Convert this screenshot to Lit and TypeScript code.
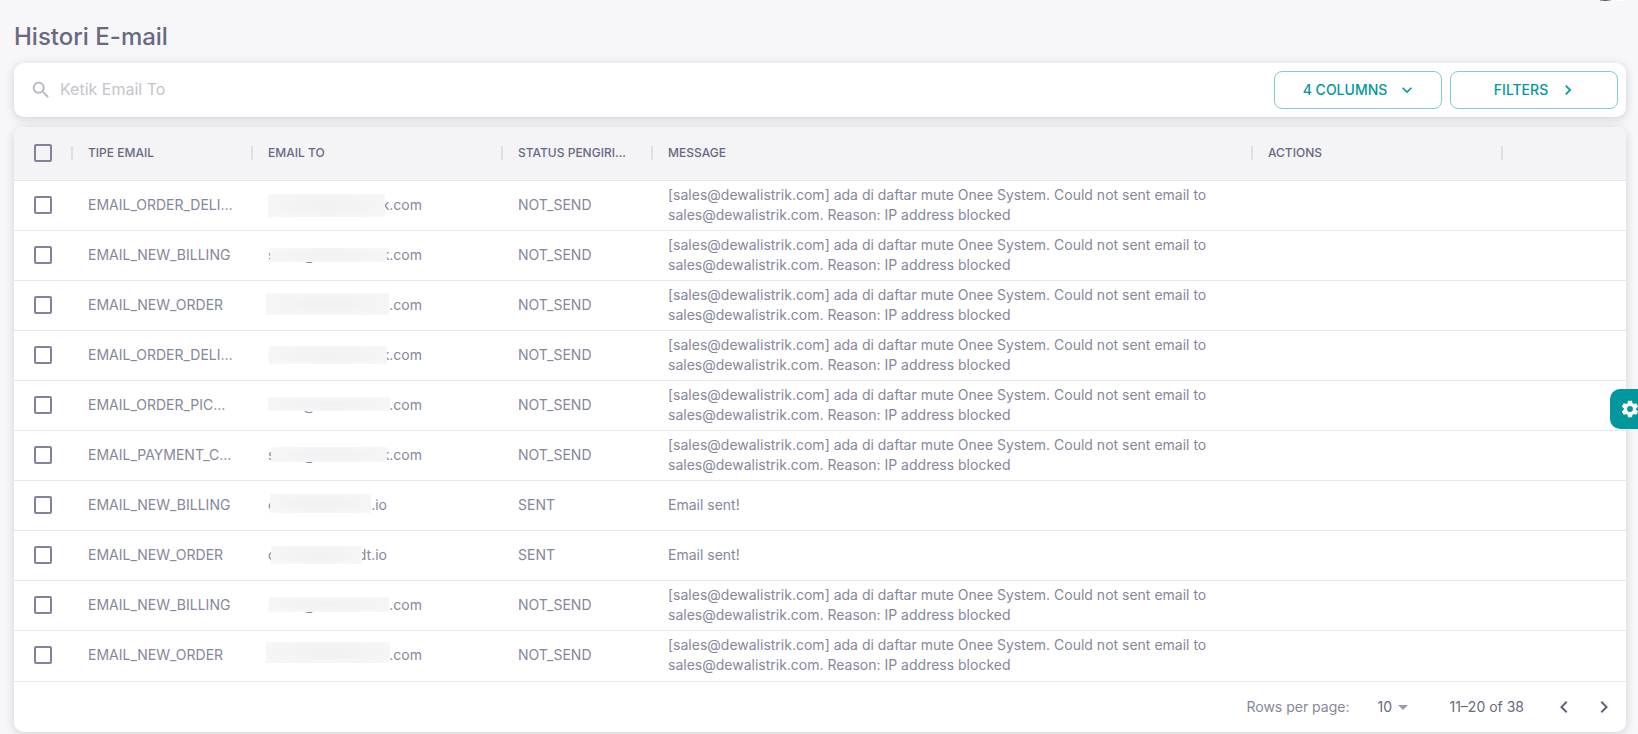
import { LitElement, html, css, svg } from "lit";
import { customElement, property, state } from "lit/decorators.js";
import { styleMap } from "lit/directives/style-map.js";

interface Mask {
  x: number;
  y: number;
  w: number;
  h: number;
}

interface MailRow {
  type: string;
  lead: string;
  tail: string;
  short?: boolean;
  status: string;
  message: string;
  mask: Mask;
}

const BLOCKED =
  "[sales@dewalistrik.com] ada di daftar mute Onee System. Could not sent email to sales@dewalistrik.com. Reason: IP address blocked";

const failed = (type: string, x: number, y: number, w: number, h: number): MailRow => ({
  type,
  lead: "sales@dewalistri",
  tail: "k.com",
  status: "NOT_SEND",
  message: BLOCKED,
  mask: { x, y, w, h },
});

const sent = (type: string, tail: string, x: number, y: number, w: number, h: number): MailRow => ({
  type,
  lead: "c",
  tail,
  short: true,
  status: "SENT",
  message: "Email sent!",
  mask: { x, y, w, h },
});

const ROWS: MailRow[] = [
  failed("EMAIL_ORDER_DELIVERED", 0, 13, 117, 23),
  failed("EMAIL_NEW_BILLING", 2, 17, 117, 14),
  failed("EMAIL_NEW_ORDER", -2, 12, 123, 22),
  failed("EMAIL_ORDER_DELIVERED", 1, 15, 118, 18),
  failed("EMAIL_ORDER_PICKUP", 0, 16, 122, 14),
  failed("EMAIL_PAYMENT_CONFIRMED", 3, 16, 116, 15),
  sent("EMAIL_NEW_BILLING", ".io", 2, 13, 101, 19),
  sent("EMAIL_NEW_ORDER", "dt.io", 3, 15, 91, 18),
  failed("EMAIL_NEW_BILLING", 1, 16, 120, 15),
  failed("EMAIL_NEW_ORDER", -2, 11, 124, 21),
];

const icon = (d: string, size: number) => svg`
  <svg width=${size} height=${size} viewBox="0 0 24 24" fill="currentColor" aria-hidden="true"><path d=${d}></path></svg>`;

const ICONS = {
  search:
    "M15.5 14h-.79l-.28-.27C15.41 12.59 16 11.11 16 9.5 16 5.91 13.09 3 9.5 3S3 5.91 3 9.5 5.91 16 9.5 16c1.61 0 3.09-.59 4.23-1.57l.27.28v.79l5 4.99L20.49 19l-4.99-5zm-6 0C7.01 14 5 11.99 5 9.5S7.01 5 9.5 5 14 7.01 14 9.5 11.99 14 9.5 14z",
  down: "M7.41 8.58 12 13.17l4.59-4.59L18 10l-6 6-6-6 1.41-1.42z",
  right: "M8.59 16.58 13.17 12 8.59 7.41 10 6l6 6-6 6-1.41-1.42z",
  left: "M15.41 16.59 10.83 12l4.58-4.59L14 6l-6 6 6 6 1.41-1.41z",
  caret: "m7 10 5 5 5-5z",
  cog: "M12 15.5A3.5 3.5 0 0 1 8.5 12 3.5 3.5 0 0 1 12 8.5a3.5 3.5 0 0 1 3.5 3.5 3.5 3.5 0 0 1-3.5 3.5m7.43-2.53c.04-.32.07-.64.07-.97s-.03-.66-.07-1l2.11-1.63c.19-.15.24-.42.12-.64l-2-3.46c-.12-.22-.39-.31-.61-.22l-2.49 1c-.52-.39-1.06-.73-1.69-.98l-.37-2.65A.506.506 0 0 0 14 2h-4c-.25 0-.46.18-.5.42l-.37 2.65c-.63.25-1.17.59-1.69.98l-2.49-1c-.22-.09-.49 0-.61.22l-2 3.46c-.13.22-.07.49.12.64L4.57 11c-.04.34-.07.67-.07 1s.03.65.07.97l-2.11 1.66c-.19.15-.25.42-.12.64l2 3.46c.12.22.39.3.61.22l2.49-1.01c.52.4 1.06.74 1.69.99l.37 2.65c.04.24.25.42.5.42h4c.25 0 .46-.18.5-.42l.37-2.65c.63-.26 1.17-.59 1.69-.99l2.49 1.01c.22.08.49 0 .61-.22l2-3.46c.12-.22.07-.49-.12-.64z",
};

@customElement("search-bar")
export class SearchBar extends LitElement {
  static styles = css`
    :host {
      display: block;
    }
    .bar {
      display: flex;
      align-items: center;
      gap: 8px;
      padding: 8px;
      border-radius: 10px;
      background: #fff;
      box-shadow: 0 2px 10px rgba(76, 78, 100, 0.22);
    }
    .field {
      display: flex;
      flex: 1;
      align-items: center;
      gap: 8px;
      padding-left: 8px;
      color: #b7b8c1;
    }
    .input {
      flex: 1;
      min-width: 0;
      padding: 0 0 2px;
      border: 0;
      outline: 0;
      background: none;
      color: #4c4e64;
      font: 400 16px/24px Inter, sans-serif;
    }
    .input::placeholder {
      color: #c3c4cc;
      opacity: 1;
    }
    .button {
      display: flex;
      align-items: center;
      justify-content: center;
      gap: 10px;
      width: 168px;
      height: 38px;
      padding: 0 0 0 4px;
      border: 1px solid #80cbcb;
      border-radius: 8px;
      background: none;
      color: #00979d;
      font: 500 14px/24px Inter, sans-serif;
      text-transform: uppercase;
      cursor: pointer;
    }
  `;

  render() {
    return html`
      <div class="bar">
        <label class="field">
          ${icon(ICONS.search, 22)}
          <input class="input" type="text" placeholder="Ketik Email To" aria-label="Ketik Email To" />
        </label>
        <button class="button" type="button">4 Columns ${icon(ICONS.down, 20)}</button>
        <button class="button" type="button">Filters ${icon(ICONS.right, 20)}</button>
      </div>
    `;
  }
}

@customElement("mail-table")
export class MailTable extends LitElement {
  @property({ attribute: false }) rows: MailRow[] = [];
  @state() private selected = new Set<number>();

  static styles = css`
    :host {
      display: block;
    }
    .card {
      overflow: hidden;
      border-radius: 10px;
      background: #fff;
    }
    .frame {
      border-radius: 10px;
      box-shadow: 0 2px 10px rgba(76, 78, 100, 0.22);
    }
    .table {
      width: 100%;
      table-layout: fixed;
      border-collapse: separate;
      border-spacing: 0;
    }
    .c-check {
      width: 58px;
    }
    .c-type {
      width: 180px;
    }
    .c-wide {
      width: 250px;
    }
    .c-status {
      width: 150px;
    }
    .c-message {
      width: 600px;
    }
    .th,
    .td {
      box-sizing: border-box;
      position: relative;
      padding: 0 18px 2px 16px;
      border-bottom: 1px solid #e7e7ea;
      text-align: left;
      vertical-align: middle;
    }
    .th {
      height: 54px;
      background: #f4f4f7;
      color: #676980;
      font-size: 12px;
      font-weight: 500;
      line-height: 24px;
      text-transform: uppercase;
    }
    .th:not(:last-child)::after {
      content: "";
      position: absolute;
      top: 19px;
      right: -1px;
      z-index: 1;
      width: 2px;
      height: 14px;
      background: #dfdfe2;
    }
    .td {
      height: 50px;
      color: #86879a;
      font-size: 14px;
      line-height: 20px;
    }
    tr:last-child > .td {
      height: 51px;
    }
    .clip {
      overflow: hidden;
      text-overflow: ellipsis;
      white-space: nowrap;
    }
    .check {
      padding: 0 0 2px;
      text-align: center;
    }
    .box {
      appearance: none;
      display: block;
      box-sizing: border-box;
      width: 18px;
      height: 18px;
      margin: 0 auto;
      border: 2px solid #82839a;
      border-radius: 2px;
      cursor: pointer;
    }
    .box:checked {
      border-color: #00979d;
      background: #00979d;
    }
    .address {
      display: flex;
      justify-content: space-between;
      width: 154px;
    }
    .address.short {
      width: 119px;
    }
    .mask {
      position: absolute;
      background: radial-gradient(ellipse at center, #f1f1f3, #f7f7f8);
    }
    .footer {
      display: flex;
      align-items: center;
      justify-content: flex-end;
      height: 50px;
      padding-right: 2px;
      color: #86879a;
      font-size: 14px;
      line-height: 20px;
    }
    .size {
      display: flex;
      align-items: center;
      gap: 28px;
    }
    .picker {
      display: flex;
      align-items: center;
      color: #9a9bab;
    }
    .picker svg {
      margin-left: -4px;
      pointer-events: none;
    }
    .select {
      appearance: none;
      padding: 0;
      border: 0;
      outline: 0;
      background: none;
      color: #676980;
      font: 400 14px/20px Inter, sans-serif;
    }
    .range {
      margin: 0 20px 0 34px;
      color: #676980;
    }
    .page {
      display: flex;
      align-items: center;
      justify-content: center;
      width: 40px;
      height: 40px;
      padding: 0;
      border: 0;
      background: none;
      color: #62647b;
      cursor: pointer;
    }
  `;

  private toggle(i: number) {
    const next = new Set(this.selected);
    if (!next.delete(i)) next.add(i);
    this.selected = next;
  }

  private toggleAll() {
    this.selected =
      this.selected.size === this.rows.length ? new Set() : new Set(this.rows.map((_, i) => i));
  }

  private renderRow(row: MailRow, i: number) {
    const m = row.mask;
    const place = {
      left: `${m.x + 16}px`,
      top: `${m.y}px`,
      width: `${m.w}px`,
      height: `${m.h}px`,
    };
    return html`
      <tr>
        <td class="td check">
          <input
            class="box"
            type="checkbox"
            aria-label="Select row"
            .checked=${this.selected.has(i)}
            @change=${() => this.toggle(i)}
          />
        </td>
        <td class="td clip">${row.type}</td>
        <td class="td">
          <div class="address ${row.short ? "short" : ""}"><span>${row.lead}</span><span>${row.tail}</span></div>
          <div class="mask" style=${styleMap(place)}></div>
        </td>
        <td class="td clip">${row.status}</td>
        <td class="td">${row.message}</td>
        <td class="td"></td>
        <td class="td"></td>
      </tr>
    `;
  }

  render() {
    return html`
      <div class="frame">
        <div class="card">
          <table class="table">
            <colgroup>
              <col class="c-check" />
              <col class="c-type" />
              <col class="c-wide" />
              <col class="c-status" />
              <col class="c-message" />
              <col class="c-wide" />
              <col />
            </colgroup>
            <thead>
              <tr>
                <th class="th check">
                  <input
                    class="box"
                    type="checkbox"
                    aria-label="Select all rows"
                    .checked=${this.selected.size > 0 && this.selected.size === this.rows.length}
                    @change=${this.toggleAll}
                  />
                </th>
                <th class="th">Tipe Email</th>
                <th class="th">Email To</th>
                <th class="th"><div class="clip">Status Pengiriman</div></th>
                <th class="th">Message</th>
                <th class="th">Actions</th>
                <th class="th"></th>
              </tr>
            </thead>
            <tbody>
              ${this.rows.map((row, i) => this.renderRow(row, i))}
            </tbody>
          </table>
          <div class="footer">
            <div class="size">
              <label for="size">Rows per page:</label>
              <div class="picker">
                <select class="select" id="size">
                  <option>10</option>
                  <option>25</option>
                  <option>50</option>
                </select>
                ${icon(ICONS.caret, 24)}
              </div>
            </div>
            <span class="range">11–20 of 38</span>
            <button class="page" type="button" aria-label="Previous page">${icon(ICONS.left, 24)}</button>
            <button class="page" type="button" aria-label="Next page">${icon(ICONS.right, 24)}</button>
          </div>
        </div>
      </div>
    `;
  }
}

@customElement("app-root")
export class AppRoot extends LitElement {
  static styles = css`
    :host {
      display: block;
      box-sizing: border-box;
      min-height: 100vh;
      overflow: hidden;
      position: relative;
      background: #f7f7f9;
      font-family: Inter, sans-serif;
    }
    .page {
      display: flex;
      flex-direction: column;
      gap: 10px;
      padding: 20px 12px 2px 14px;
    }
    .title {
      margin: 0;
      color: #676980;
      font-size: 24px;
      font-weight: 500;
      line-height: 33px;
    }
    .avatar {
      position: absolute;
      top: 0;
      right: 15px;
      display: flex;
      gap: 6px;
    }
    .photo {
      width: 11px;
      height: 1px;
      background: linear-gradient(90deg, #a9a7a6, #5d564f, #cfcfd2);
    }
    .status {
      width: 6px;
      height: 1px;
      background: #fff;
    }
    .settings {
      position: fixed;
      top: 389px;
      right: 0;
      display: flex;
      align-items: center;
      width: 28px;
      height: 40px;
      padding: 0 0 0 10px;
      overflow: hidden;
      border: 0;
      border-radius: 10px 0 0 10px;
      background: #00979d;
      color: #fff;
      cursor: pointer;
    }
    .settings svg {
      flex: none;
    }
  `;

  render() {
    return html`
      <div class="avatar"><span class="photo"></span><span class="status"></span></div>
      <main class="page">
        <h1 class="title">Histori E-mail</h1>
        <search-bar></search-bar>
        <mail-table .rows=${ROWS}></mail-table>
      </main>
      <button class="settings" type="button" aria-label="Settings">${icon(ICONS.cog, 20)}</button>
    `;
  }
}
